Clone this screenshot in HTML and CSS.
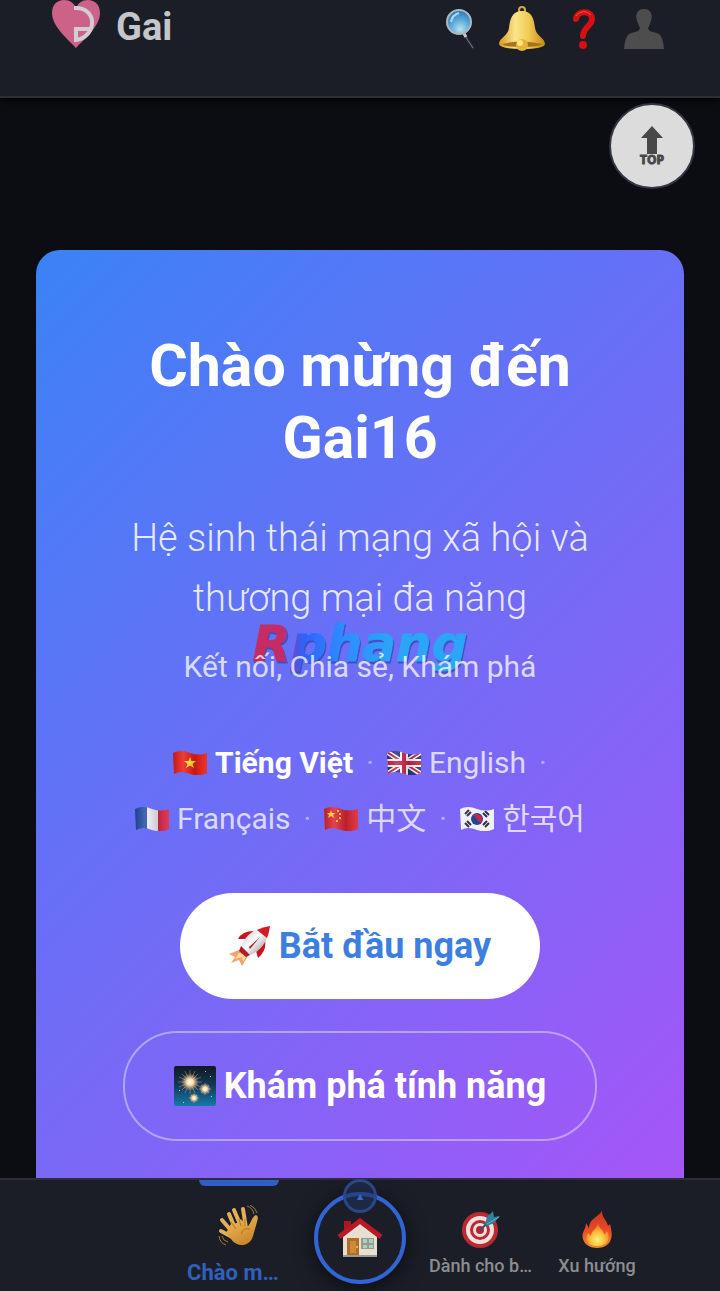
FILE: index.html
```html
<!DOCTYPE html>
<html lang="vi">
 <head>
  <meta charset="utf-8">
  <meta name="viewport" content="width=device-width, initial-scale=1">
  <title>Gai16</title>
  <link rel="stylesheet" href="styles.css">
 </head>
 <body>

  <header id="header">
    <a class="brand" href="#">
      <svg class="logo" viewBox="0 0 48 48" aria-hidden="true">
        <path d="M24 48C17 40 0 27 0 13C0 5 5 0 12 0C18 0 22 3 24 8C26 3 30 0 36 0C43 0 48 5 48 13C48 27 31 40 24 48Z" fill="#cc6288"/>
        <path d="M22 8H26C36 9 41 17 40 24C39 33 32 39 24 40V29H38" fill="none" stroke="#d2ccd3" stroke-width="4"/>
      </svg>
      <span>Gai</span>
    </a>
    <nav class="tools">
      <button aria-label="Tìm kiếm">
        <svg width="30" height="42" viewBox="0 0 30 42">
          <defs><radialGradient id="glass" cx=".55" cy=".8" r=".8"><stop offset="0" stop-color="#b8e3ef"/><stop offset=".5" stop-color="#5ca9d8"/><stop offset="1" stop-color="#2674b4"/></radialGradient></defs>
          <path d="M18 26L27 40" stroke="#2e2d2e" stroke-width="3" stroke-linecap="round"/>
          <path d="M19 28L27 40" stroke="#77777a" stroke-width="1"/>
          <path d="M17 24L20 29" stroke="#c4c9cc" stroke-width="3"/>
          <circle cx="13" cy="14" r="12" fill="url(#glass)" stroke="#aeb7bd" stroke-width="2"/>
          <path d="M5 14Q6 7 13 5" fill="none" stroke="#a7dbf2" stroke-width="2"/>
        </svg>
      </button>
      <button aria-label="Thông báo">
        <svg width="48" height="46" viewBox="0 0 48 46">
          <defs><linearGradient id="gold"><stop offset="0" stop-color="#d89a20"/><stop offset=".35" stop-color="#fbe58a"/><stop offset=".65" stop-color="#f0cb52"/><stop offset="1" stop-color="#c98715"/></linearGradient></defs>
          <circle cx="24" cy="4" r="3" fill="none" stroke="#d9a83b" stroke-width="2"/>
          <path d="M24 5C14 5 12 13 11 22C10 30 1 32 1 38Q2 43 24 43Q46 43 47 38C47 32 38 30 37 22C36 13 34 5 24 5Z" fill="url(#gold)"/>
          <path d="M4 38Q24 33 44 38Q42 41 24 41Q6 41 4 38Z" fill="#a87321"/>
          <circle cx="24" cy="39" r="6" fill="#e7b43a"/><circle cx="22" cy="37" r="3" fill="#ffe77c"/>
        </svg>
      </button>
      <button aria-label="Trợ giúp">
        <svg width="24" height="40" viewBox="0 0 24 40">
          <path d="M5 10C6 1 21 1 21 10C21 17 12 18 12 27" fill="none" stroke="#d50f12" stroke-width="6" stroke-linecap="round"/>
          <path d="M5 7C8 2 16 1 20 6" fill="none" stroke="#ed5351" stroke-width="1"/>
          <circle cx="12" cy="36" r="4" fill="#d50f12"/>
        </svg>
      </button>
      <button aria-label="Tài khoản">
        <svg width="40" height="40" viewBox="0 0 40 40">
          <path d="M20 0C13 0 11 6 13 12Q15 17 16 19C16 23 9 23 5 25Q1 28 0 40H40Q39 28 35 25C31 23 24 23 24 19Q26 16 27 12C29 6 27 0 20 0Z" fill="#4d4d4e"/>
        </svg>
      </button>
    </nav>
  </header>

  <a class="to-top" href="#header" aria-label="Lên đầu trang">
    <svg width="22" height="28" viewBox="0 0 22 28"><path d="M11 0L22 12H16V28H6V12H0Z" fill="#484848"/></svg>
    <span>TOP</span>
  </a>

  <main>
    <section class="hero">
      <span class="mark" aria-hidden="true">Rphang</span>
      <h1>Chào mừng đến Gai16</h1>
      <p class="lead">Hệ sinh thái mạng xã hội và thương mại đa năng</p>
      <p class="tagline">Kết nối, Chia sẻ, Khám phá</p>

      <div class="languages">
        <a class="active" href="#">
          <svg class="flag" viewBox="0 0 34 24">
            <defs>
              <clipPath id="wave"><path d="M0 2Q8 -2 17 2Q26 5 34 2V22Q26 26 17 23Q8 19 1 23Z"/></clipPath>
              <linearGradient id="fold"><stop offset="0" stop-color="#000" stop-opacity=".15"/><stop offset=".3" stop-color="#fff" stop-opacity=".15"/><stop offset=".65" stop-color="#000" stop-opacity=".15"/><stop offset="1" stop-color="#fff" stop-opacity=".1"/></linearGradient>
            </defs>
            <g clip-path="url(#wave)"><path d="M0 0H34V24H0Z" fill="#e91c13"/><path d="M17 6L18.400 10H23L19.500 13L21 17L17 14.500L13 17L14.500 13L11 10H15.600Z" fill="#ffe52c"/><path d="M0 0H34V24H0Z" fill="url(#fold)"/></g>
          </svg>
          <span>Tiếng Việt</span>
        </a>
        <i>·</i>
        <a href="#">
          <svg class="flag" viewBox="0 0 34 24"><g clip-path="url(#wave)">
            <path d="M0 0H34V24H0Z" fill="#29347e"/><path d="M0 1L34 23M0 23L34 1" stroke="#fff" stroke-width="5"/><path d="M0 1L34 23M0 23L34 1" stroke="#cb2444" stroke-width="2"/>
            <path d="M17 0V24M0 12H34" stroke="#fff" stroke-width="8"/><path d="M17 0V24M0 12H34" stroke="#cc2145" stroke-width="4"/><path d="M0 0H34V24H0Z" fill="url(#fold)"/>
          </g></svg>
          <span>English</span>
        </a>
        <i>·</i>
        <a href="#">
          <svg class="flag" viewBox="0 0 34 24"><g clip-path="url(#wave)"><path d="M0 0H12V24H0Z" fill="#234da7"/><path d="M12 0H23V24H12Z" fill="#f2f2fa"/><path d="M23 0H34V24H23Z" fill="#db2347"/><path d="M0 0H34V24H0Z" fill="url(#fold)"/></g></svg>
          <span>Français</span>
        </a>
        <i>·</i>
        <a href="#">
          <svg class="flag" viewBox="0 0 34 24"><g clip-path="url(#wave)"><path d="M0 0H34V24H0Z" fill="#dc2430"/><path d="M7 3L8 6H11L9 8L10 11L7 9L4 11L5 8L3 6H6Z" fill="#ffda34"/><path d="M13 3H15V5H13ZM15 6H17V8H15ZM15 10H17V12H15ZM12 13H14V15H12Z" fill="#ffc52f"/><path d="M0 0H34V24H0Z" fill="url(#fold)"/></g></svg>
          <span>中文</span>
        </a>
        <i>·</i>
        <a href="#">
          <svg class="flag" viewBox="0 0 34 24"><g clip-path="url(#wave)"><path d="M0 0H34V24H0Z" fill="#f0f0f8"/><circle cx="17" cy="12" r="6" fill="#204995"/><path d="M12 9A6 6 0 0 1 22 15Q19 17 17 12Q14 8 12 9Z" fill="#cc234c"/><path d="M5 7L9 3M7 9L11 5M25 4L29 8M23 6L27 10M5 16L9 20M7 14L11 18M25 20L29 16M23 18L27 14" stroke="#333344" stroke-width="2"/></g></svg>
          <span>한국어</span>
        </a>
      </div>

      <div class="actions">
        <button class="primary">
          <svg width="42" height="40" viewBox="0 0 42 40" aria-hidden="true">
            <defs><linearGradient id="hull" x2="1" y2="1"><stop stop-color="#a6a6ad"/><stop offset=".45" stop-color="#fff"/><stop offset="1" stop-color="#77777d"/></linearGradient></defs>
            <path d="M10 24L0 28L6 31L2 37L10 34L13 40L19 30Z" fill="#f6a26b"/><path d="M10 27L6 33L13 31L14 36L18 29Z" fill="#ffe0a0"/>
            <path d="M25 5Q13 5 9 13L18 13ZM36 14Q38 25 29 32L27 25Z" fill="#c9141c"/>
            <path d="M12 22C15 10 25 2 41 0C39 16 31 26 19 30Z" fill="url(#hull)"/>
            <path d="M28 4Q34 1 41 0Q40 7 38 12Z" fill="#d31b22"/><path d="M12 20L21 29L17 31L10 25Z" fill="#bd1721"/>
            <path d="M20 21L31 11L21 23Z" fill="#b51c24"/>
          </svg>
          <span>Bắt đầu ngay</span>
        </button>
        <button class="outline">
          <svg width="42" height="40" viewBox="0 0 42 40" aria-hidden="true">
            <defs>
              <linearGradient id="night" x2="0" y2="1"><stop stop-color="#111722"/><stop offset=".5" stop-color="#123b5c"/><stop offset="1" stop-color="#167aa8"/></linearGradient>
              <radialGradient id="spark"><stop stop-color="#fff"/><stop offset=".35" stop-color="#ffe2ae"/><stop offset="1" stop-color="#d79d65" stop-opacity="0"/></radialGradient>
            </defs>
            <rect width="42" height="40" rx="2" fill="url(#night)"/>
            <path d="M16 4V28M4 16H28M8 8L24 24M8 24L24 8M11 5L21 27M5 21L27 11M5 11L27 21M11 27L21 5" stroke="#d79d65" stroke-width="1" opacity=".5"/>
            <path d="M31 17V29M25 23H37M27 19L35 27M27 27L35 19M20 28V37M15 32H25M17 29L23 35M17 35L23 29" stroke="#e0a992" stroke-width="1" opacity=".5"/>
            <circle cx="16" cy="16" r="9" fill="url(#spark)"/><circle cx="31" cy="23" r="6" fill="url(#spark)"/><circle cx="20" cy="32" r="5" fill="url(#spark)"/>
            <path d="M31 5H32V6H31ZM36 10H37V11H36ZM5 24H6V25H5ZM37 30H38V31H37ZM9 36H10V37H9Z" fill="#b7d0df"/>
          </svg>
          <span>Khám phá tính năng</span>
        </button>
      </div>
    </section>
  </main>

  <nav class="tabs">
    <a class="tab active" href="#">
      <svg width="42" height="42" viewBox="0 0 42 42" aria-hidden="true">
        <defs><linearGradient id="skin" x2=".6" y2="1"><stop stop-color="#f0c060"/><stop offset="1" stop-color="#cc852a"/></linearGradient></defs>
        <path d="M11 9L19 28M16 5L24 24M25 4L28 23M4 15L16 29M3 26L16 33" stroke="#e3b154" stroke-width="4" stroke-linecap="round"/>
        <path d="M13 19L19 18L23 14L29 22C33 19 34 11 38 10Q41 11 39 17L35 31C32 42 19 43 13 34L8 28Z" fill="url(#skin)"/>
        <path d="M13 17L18 24M21 14L23 21M27 14V21M23 29Q26 22 32 24" fill="none" stroke="#b57222" stroke-width="1"/>
        <path d="M29 1Q35 3 36 9M32 0Q38 3 39 8M1 31Q2 38 8 40M4 31Q5 36 10 37" fill="none" stroke="#a77933" stroke-width="1"/>
      </svg>
      <span>Chào mừng</span>
    </a>
    <a class="home" href="#" aria-label="Trang chủ">
      <svg width="44" height="40" viewBox="0 0 44 40">
        <path d="M6 3H13V14H6Z" fill="#a91821"/><path d="M5 17L22 5L39 17V39H5Z" fill="#e7e0d1"/>
        <path d="M5 37H39V39H5Z" fill="#9b9b91"/><path d="M9 20H21V37H9Z" fill="#b06d25"/><path d="M12 23H18V35H12Z" fill="#cd8b38"/><circle cx="19" cy="29" r="1" fill="#f4cb67"/>
        <path d="M23 20H36V31H23Z" fill="#9a9984"/><path d="M25 21H29V25H25ZM31 21H35V25H31ZM25 27H29V30H25ZM31 27H35V30H31Z" fill="#a4d0ce"/>
        <path d="M1 19L22 3L43 19" fill="none" stroke="#b91925" stroke-width="5"/>
      </svg>
      <span class="expand">▲</span>
    </a>
    <a class="tab" href="#">
      <svg width="38" height="38" viewBox="0 0 38 38" aria-hidden="true">
        <circle cx="18" cy="20" r="18" fill="#b92a31"/><circle cx="18" cy="20" r="14" fill="#eee1df"/><circle cx="18" cy="20" r="10" fill="#bd2932"/><circle cx="18" cy="20" r="7" fill="#eee0dd"/><circle cx="18" cy="20" r="4" fill="#b92330"/>
        <path d="M18 20L31 8" stroke="#245b70" stroke-width="2"/><path d="M23 14L25 7L31 1L32 7L38 6L32 13L25 16Z" fill="#2b839f"/><path d="M25 14L37 7" stroke="#61b3c4" stroke-width="1"/>
      </svg>
      <span>Dành cho bạn</span>
    </a>
    <a class="tab" href="#">
      <svg width="30" height="38" viewBox="0 0 30 38" aria-hidden="true">
        <defs>
          <linearGradient id="fire" x2="0" y2="1"><stop stop-color="#c93422"/><stop offset=".5" stop-color="#e84a24"/><stop offset="1" stop-color="#f08a2a"/></linearGradient>
          <radialGradient id="ember" cx=".5" cy=".75" r=".6"><stop stop-color="#ffed82"/><stop offset=".5" stop-color="#fbc53c"/><stop offset="1" stop-color="#f07a28"/></radialGradient>
        </defs>
        <path d="M20 1C20 8 25 10 26 16L28 14C30 21 30 26 29 29C26 41 4 41 1 29C-1 22 4 20 4 13L7 18C7 9 15 8 20 1Z" fill="url(#fire)"/>
        <path d="M16 12C16 19 22 19 22 25L25 21C30 31 23 36 15 36C6 36 2 30 6 23L9 26C9 20 16 19 16 12Z" fill="url(#ember)"/>
      </svg>
      <span>Xu hướng</span>
    </a>
  </nav>

 </body>
</html>
```
FILE: styles.css
```css
*{box-sizing:border-box;margin:0;padding:0}
body{background:#0c0d12;color:white;font-family:Roboto,"Noto Sans CJK SC","Noto Sans CJK KR",sans-serif}
a{color:inherit;text-decoration:none}
button{border:0;background:none;color:inherit;font:inherit;cursor:pointer}
svg{display:block;flex:none}

#header{display:flex;justify-content:space-between;align-items:flex-start;height:98px;padding:0 46px 0 52px;background:#1b1e26;border-bottom:2px solid #2d2e38;box-shadow:0 2px 8px #000}
.brand{display:flex;align-items:center;gap:16px;font-size:38px;line-height:54px;font-weight:700;color:#c4c6cb}
.logo{width:48px;height:48px;margin-bottom:6px}
.tools{display:flex}
.tools button{display:flex;align-items:center;justify-content:center;width:61px;height:58px}

.to-top{position:fixed;top:103px;right:25px;width:86px;height:86px;border:2px solid #343544;border-radius:50%;background:#dcdcdc;color:#484848;display:flex;flex-direction:column;align-items:center;justify-content:center}
.to-top span{font:bold 12px/12px "Open Sans",sans-serif;-webkit-text-stroke:1px #484848}

main{padding:152px 36px 72px}
.hero{position:relative;z-index:0;padding:80px 64px;border-radius:24px;background:linear-gradient(135deg,#3b82f6,#a855f7);text-align:center}
h1{font-size:59px;line-height:72px;font-weight:700}
.lead{margin-top:34px;font-size:38px;line-height:60px;font-weight:300;color:rgba(255,255,255,.85)}
.tagline{margin-top:14px;font-size:30px;line-height:50px;color:rgba(255,255,255,.75)}
.mark{position:absolute;z-index:-1;top:362px;left:0;right:0;width:max-content;margin:auto;font:italic bold 50px/64px "DejaVu Sans",sans-serif;color:transparent;-webkit-text-stroke:1px transparent;background:linear-gradient(90deg,#c62b62 14%,#7048c8 18%,#2d63fa 24%,#2d8cff 42%,#2ba5f7 65%);background-clip:text;-webkit-background-clip:text;filter:drop-shadow(1px 2px 0 #3f50bd)}

.languages{display:flex;flex-wrap:wrap;justify-content:center;column-gap:13px;margin-top:43px;font-size:30px;line-height:56px;color:rgba(255,255,255,.75)}
.languages a{display:flex;align-items:center;gap:8px}
.languages i{font-style:normal;opacity:.6}
.languages .active{font-weight:700;color:white}
.flag{width:34px;height:24px}

.actions{display:flex;flex-direction:column;align-items:center;gap:32px;margin-top:46px}
.actions button{display:flex;align-items:center;gap:8px;padding:32px 49px;border-radius:54px;font-size:36px;line-height:42px;font-weight:700}
.actions .primary{background:white;color:#3d7fdf}
.actions .outline{border:2px solid rgba(255,255,255,.4)}

.tabs{position:fixed;left:0;right:0;bottom:0;display:flex;justify-content:center;height:113px;padding-left:116px;background:#1b1e26;border-top:2px solid #2d2e3a}
.tab{position:relative;display:flex;flex-direction:column;align-items:center;gap:5px;width:116px;padding:30px 6px 0;font-size:18px;line-height:26px;font-weight:500;color:#8c8d91}
.tab span{max-width:100%;overflow:hidden;text-overflow:ellipsis;white-space:nowrap}
.tab.active{padding-top:25px;gap:10px;font-size:22px;line-height:32px;font-weight:700;color:#3060be}
.tab.active::before{content:"";position:absolute;top:0;left:18px;right:18px;height:6px;border-radius:0 0 6px 6px;background:#2f5fc5}
.home{position:relative;display:flex;align-items:center;justify-content:center;width:92px;height:92px;margin:12px 17px 0;border:4px solid #3164d4;border-radius:50%;background:#1b1e26;box-shadow:0 4px 20px rgba(0,0,0,.6)}
.expand{position:absolute;top:-17px;left:25px;width:34px;height:34px;border:3px solid #29488b;border-radius:50%;background:rgba(32,47,86,.6);color:#3967c5;font:8px/30px "DejaVu Sans",sans-serif;text-align:center}
```
